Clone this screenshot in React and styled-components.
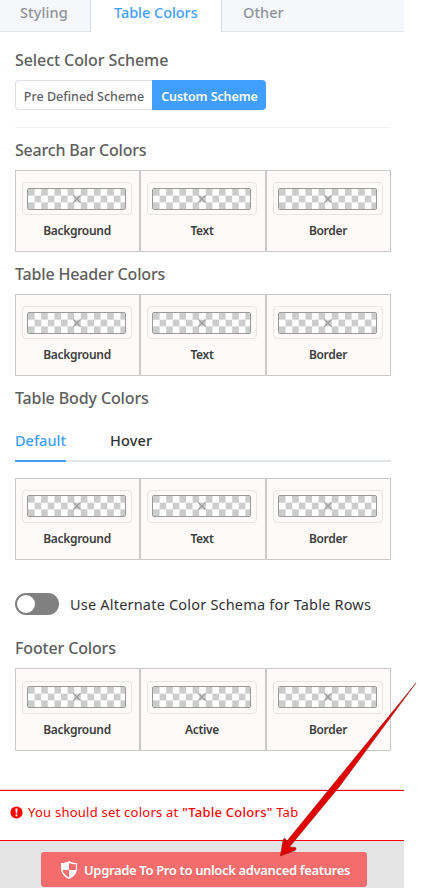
import React from "react";
import styled, { createGlobalStyle, css } from "styled-components";

const GlobalStyle = createGlobalStyle`
  * { box-sizing: border-box; }
  body { margin: 0; background: #fff; font-family: "Noto Sans", "Open Sans", sans-serif; overflow: hidden; }
  button { font-family: inherit; margin: 0; cursor: pointer; }
`;

const Page = styled.div`
  position: relative;
  width: 421px;
  height: 888px;
  overflow: hidden;
`;

const Panel = styled.main`
  width: 404px;
  display: flex;
  flex-direction: column;
`;

const TabBar = styled.nav`
  display: flex;
  height: 32px;
  background: #f5f7fa;
`;

const Tab = styled.button`
  width: ${(p) => p.$width}px;
  height: 32px;
  padding: 0 0 6px ${(p) => p.$inset}px;
  border: 0;
  border-bottom: 1px solid #dfe4ed;
  background: transparent;
  color: #909399;
  font-size: 14.5px;
  font-weight: 500;
  line-height: 25px;
  letter-spacing: ${(p) => p.$spacing || 0}px;
  text-align: left;
  white-space: nowrap;
  ${(p) =>
    p.$active &&
    css`
      border: 1px solid #dcdfe6;
      border-width: 0 1px;
      padding-bottom: 7px;
      background: #fff;
      color: #409eff;
    `}
`;

const Content = styled.section`
  height: 757px;
  padding: 17px 13px 0 15px;
`;

const Heading = styled.h3`
  height: 22px;
  margin: ${(p) => p.$top || 0}px 0 9px;
  color: #5e5e5e;
  font-size: 16px;
  font-weight: 500;
  line-height: 22px;
  letter-spacing: ${(p) => p.$spacing || 0}px;
  white-space: nowrap;
`;

const RadioGroup = styled.div`
  display: flex;
  height: 30px;
`;

const RadioButton = styled.button`
  width: ${(p) => p.$width}px;
  padding: 3px 0 0;
  border: 1px solid #dcdfe6;
  border-right: 0;
  border-radius: 4px 0 0 4px;
  background: #fff;
  color: #606266;
  font-size: 12.5px;
  font-weight: 500;
  line-height: 25px;
  letter-spacing: ${(p) => p.$spacing || 0}px;
  white-space: nowrap;
  ${(p) =>
    p.$active &&
    css`
      border-color: #409eff;
      border-radius: 0 4px 4px 0;
      background: #409eff;
      color: #fff;
      font-weight: 600;
    `}
`;

const Divider = styled.hr`
  height: 1px;
  margin: 17px 0 11px;
  border: 0;
  background: #f1f1f1;
`;

const SwatchRow = styled.div`
  display: grid;
  grid-template-columns: 125px 126px 125px;
  width: 376px;
  height: ${(p) => p.$height || 82}px;
`;

const SwatchCell = styled.div`
  display: flex;
  flex-direction: column;
  padding: ${(p) => p.$top}px 0 0 6px;
  border: 1px solid #c9c9c9;
  background: #fffafa;
`;

const Picker = styled.div`
  width: 110px;
  height: 33px;
  padding: ${(p) => p.$pad}px 0 0 4px;
  border: 1px solid #e6e6e6;
  border-radius: 4px;
`;

const Swatch = styled.div`
  width: 99px;
  height: 22px;
  border: 1px solid #999;
  border-radius: 2px;
  overflow: hidden;
  background: #fff;
  svg { display: block; }
`;

const SwatchLabel = styled.span`
  width: 110px;
  height: 18px;
  margin-top: 7px;
  color: #3d3d3d;
  font-size: 12px;
  font-weight: 600;
  line-height: 18px;
  letter-spacing: -0.3px;
  text-align: center;
`;

const SubTabs = styled.div`
  display: flex;
  gap: 44px;
  width: 376px;
  height: 43px;
  margin: 10px 0 16px;
  border-bottom: 2px solid #e4e7ed;
`;

const SubTab = styled.button`
  width: ${(p) => p.$width}px;
  height: 43px;
  padding: 1px 0 0;
  border: 0;
  border-bottom: 2px solid ${(p) => (p.$active ? "#409eff" : "transparent")};
  background: transparent;
  color: ${(p) => (p.$active ? "#409eff" : "#303133")};
  font-size: 14.5px;
  font-weight: 500;
  letter-spacing: ${(p) => p.$spacing || 0}px;
  text-align: left;
  white-space: nowrap;
`;

const ToggleRow = styled.label`
  display: flex;
  align-items: center;
  gap: 11px;
  height: 22px;
  margin-top: 33px;
  color: #303133;
  font-size: 14.5px;
  letter-spacing: ${(p) => p.$spacing || 0}px;
  white-space: nowrap;
`;

const Toggle = styled.span`
  flex: none;
  width: 44px;
  height: 22px;
  padding: 2px;
  border-radius: 11px;
  background: #808080;
  &::after {
    content: "";
    display: block;
    width: 18px;
    height: 18px;
    border-radius: 50%;
    background: #fff;
  }
`;

const Notice = styled.div`
  display: flex;
  align-items: flex-start;
  gap: 5px;
  height: 52px;
  padding: 11px 0 0 10px;
  border-top: 1px solid #e0e0e0;
  border-bottom: 1px solid red;
  box-shadow: inset 0 1px red;
  color: #f00;
  font-size: 13px;
  line-height: 22px;
  white-space: nowrap;
  svg { flex: none; margin-top: 5px; }
`;

const NoticeText = styled.span`
  letter-spacing: ${(p) => p.$spacing || 0}px;
  b { font-weight: 500; }
`;

const Footer = styled.footer`
  height: 47px;
  padding: 11px 0 0 41px;
  background: #e4e4e4;
`;

const UpgradeButton = styled.button`
  display: flex;
  align-items: center;
  gap: 7px;
  width: 326px;
  height: 35px;
  padding: 0 0 0 20px;
  border: 0;
  border-radius: 3px;
  background: #f56c6c;
  color: #fff;
  font-size: 13px;
  font-weight: 600;
  letter-spacing: ${(p) => p.$spacing || 0}px;
  white-space: nowrap;
  svg { flex: none; }
`;

const Arrow = styled.svg`
  position: absolute;
  left: 270px;
  top: 675px;
  pointer-events: none;
`;

const CHECKS = [0, 1, 2].flatMap((row) =>
  Array.from({ length: 15 }, (_, col) => ({ row, col })).filter(({ col }) => (col + row) % 2 === 0)
);

function EmptyColor() {
  return (
    <Swatch>
      <svg width="97" height="20" viewBox="0 0 97 20">
        {CHECKS.map(({ row, col }) => (
          <rect key={`${row}-${col}`} x={col * 6.6} y={row * 6.67} width="6.6" height="6.67" fill="#ccc" />
        ))}
        <path d="M45.2 6.3l7.4 7.4M52.600 6.3l-7.400 7.400" stroke="#999" strokeWidth="1.1" />
      </svg>
    </Swatch>
  );
}

function ColorRow({ labels, top = 11, pad = 5, height }) {
  return (
    <SwatchRow $height={height}>
      {labels.map((label) => (
        <SwatchCell key={label} $top={top}>
          <Picker $pad={pad}>
            <EmptyColor />
          </Picker>
          <SwatchLabel>{label}</SwatchLabel>
        </SwatchCell>
      ))}
    </SwatchRow>
  );
}

export default function App() {
  return (
    <Page>
      <GlobalStyle />
      <Panel>
        <TabBar>
          <Tab $width={90} $inset={20} $spacing={0.1}>Styling</Tab>
          <Tab $active $width={132} $inset={23} $spacing={-0.05}>Table Colors</Tab>
          <Tab $width={182} $inset={21} $spacing={0.05}>Other</Tab>
        </TabBar>
        <Content>
          <Heading $spacing={-0.08}>Select Color Scheme</Heading>
          <RadioGroup>
            <RadioButton $width={137} $spacing={0}>Pre Defined Scheme</RadioButton>
            <RadioButton $active $width={114} $spacing={-0.1}>Custom Scheme</RadioButton>
          </RadioGroup>
          <Divider />
          <Heading $spacing={-0.2}>Search Bar Colors</Heading>
          <ColorRow labels={["Background", "Text", "Border"]} />
          <Heading $top={11} $spacing={-0.17}>Table Header Colors</Heading>
          <ColorRow labels={["Background", "Text", "Border"]} />
          <Heading $top={11} $spacing={-0.12}>Table Body Colors</Heading>
          <SubTabs>
            <SubTab $active $width={51} $spacing={0}>Default</SubTab>
            <SubTab $width={44} $spacing={0.15}>Hover</SubTab>
          </SubTabs>
          <ColorRow labels={["Background", "Text", "Border"]} pad={4} />
          <ToggleRow $spacing={0.2}>
            <Toggle />
            Use Alternate Color Schema for Table Rows
          </ToggleRow>
          <Heading $top={22} $spacing={-0.15}>Footer Colors</Heading>
          <ColorRow labels={["Background", "Active", "Border"]} top={12} pad={4} height={83} />
        </Content>
        <Notice>
          <svg width="13" height="13" viewBox="0 0 13 13">
            <circle cx="6.5" cy="6.5" r="6.1" fill="#f00" />
            <path d="M5.4 2.6h2.2L7.2 7.5H5.8z" fill="#fff" />
            <circle cx="6.5" cy="9.3" r="1.1" fill="#fff" />
          </svg>
          <NoticeText $spacing={0.24}>
            You should set colors at <b>"Table Colors"</b> Tab
          </NoticeText>
        </Notice>
        <Footer>
          <UpgradeButton $spacing={-0.35}>
            <svg width="16" height="18" viewBox="0 0 16 18">
              <path d="M8 0C5.8 1.4 3 2 0 2v6.2C.3 12.4 3.6 15.9 8 18c4.4-2.1 7.7-5.6 8-9.8V2C13 2 10.2 1.4 8 0z" fill="#fff" />
              <path d="M8 1.9V8.9H14.7C15 7.3 14.9 5 14.9 3.2 12.2 3.2 10 2.7 8 1.9zM8 8.9V16.4C5 14.7 2.2 12.2 1.4 8.9z" fill="#f56c6c" />
            </svg>
            Upgrade To Pro to unlock advanced features
          </UpgradeButton>
        </Footer>
      </Panel>
      <Arrow width="151" height="190" viewBox="0 0 151 190">
        <path
          d="M146 8 63 109.500 16.500 166.500 15.500 163.800Q13.500 163 13 165.500L10.300 181 25 175.500Q27 174 25.500 172.500L19.500 172 69.500 111.500z"
          fill="#e00000"
          stroke="#8d1c1c"
          strokeOpacity="0.75"
          strokeWidth="0.7"
          strokeLinejoin="round"
        />
      </Arrow>
    </Page>
  );
}
